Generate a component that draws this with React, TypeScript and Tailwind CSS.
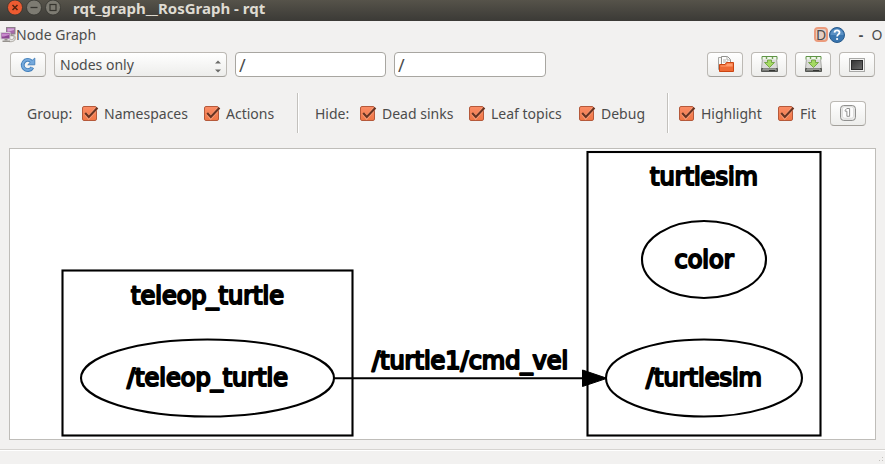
import React, { useState } from 'react';

const BUTTON =
  'flex h-[25px] w-9 shrink-0 items-center justify-center rounded-[4px] border border-[#bcb9b4] border-b-[#a3a09b] bg-linear-to-b from-white to-[#ededeb]';

interface ToolButtonProps {
  label: string;
  children: React.ReactNode;
}

const ToolButton: React.FC<ToolButtonProps> = ({ label, children }) => (
  <button type="button" aria-label={label} className={BUTTON}>
    {children}
  </button>
);

interface CheckOptionProps {
  label: string;
  className: string;
}

const CheckOption: React.FC<CheckOptionProps> = ({ label, className }) => {
  const [checked, setChecked] = useState(true);
  return (
    <label className={`flex shrink-0 items-center gap-1.5 pt-0.5 whitespace-nowrap ${className}`}>
      <span className="grid h-4 w-4 shrink-0">
        <input
          type="checkbox"
          checked={checked}
          onChange={(e) => setChecked(e.target.checked)}
          className="col-start-1 row-start-1 h-[15px] w-[15px] appearance-none rounded-[2px] border border-[#b5593a] bg-white checked:bg-linear-to-b checked:from-[#fa8c65] checked:to-[#f07746]"
        />
        {checked && (
          <svg viewBox="0 0 16 16" className="pointer-events-none col-start-1 row-start-1 h-4 w-4 overflow-visible">
            <path d="M3.5 7.5 6.7 11.5 14.5 2.5" fill="none" stroke="#ffb698" strokeWidth="3.4" opacity=".6" />
            <path d="M3.2 7 6.8 11 15.5 1.8" fill="none" stroke="#683422" strokeWidth="2.1" />
          </svg>
        )}
      </span>
      {label}
    </label>
  );
};

const Separator = () => (
  <div className="h-10 w-0.5 shrink-0 border-r border-l border-r-white border-l-[#c3c1bd]" />
);

const RefreshIcon = () => (
  <svg viewBox="0 0 16 16" className="h-4 w-4">
    <path d="M12.4 10.3A5.1 5.1 0 1 1 11.2 4.2" fill="none" stroke="#4480bb" strokeWidth="3.8" />
    <path d="M14.8 1V7.8H7.8L10.4 5.3 9 4.1 12.4 3.3Z" fill="#75a9dc" stroke="#4480bb" strokeWidth=".9" />
    <path d="M12.2 10.4A5.1 5.1 0 1 1 11.2 4.2" fill="none" stroke="#75a9dc" strokeWidth="2" />
  </svg>
);

const OpenIcon = () => (
  <svg viewBox="0 0 17 17" className="h-[17px] w-[17px]">
    <path d="M1.5 1.5H7L9 3.5V13.5H1.5Z" fill="#f8f8f7" stroke="#a5a5a1" />
    <path d="M4.5.5H10.5L13.5 3.5V13.5H4.5Z" fill="#fff" stroke="#92928e" />
    <path d="M10 .5V4H13.5M6 4H9M6 6H11" fill="none" stroke="#b0b0ac" />
    <path d="M2.5 15.5V8.5H8L9.5 6.5H16.5V15.5Z" fill="#ee6a35" stroke="#ca4512" />
    <path d="M3.5 9.5H9L10 7.5H15.6V10.5H3.5Z" fill="#ff9c6d" />
  </svg>
);

const SaveIcon = () => (
  <svg viewBox="0 0 17 17" className="h-[17px] w-[17px]">
    <path d="M1.5 2.5H15.5L16.5 12.5H.5Z" fill="#dadad8" stroke="#a6a7a3" />
    <path d="M.5 12.5H16.5V15.5H.5Z" fill="#777975" stroke="#555753" />
    <path d="M2 13H15" stroke="#b8bab6" />
    <path d="M8 14.5H14" stroke="#343633" />
    <path d="M1 3.5V.5H16V3.5" fill="#f1f7ec" stroke="#5f9446" />
    <path d="M5.5 1V3M11.5 1V3" stroke="#73a556" strokeWidth="1.4" />
    <path d="M6.5 4H10.5V6.5H13.5L8.5 11.5 3.5 6.5H6.5Z" fill="#a4da62" stroke="#669b35" strokeWidth=".8" />
  </svg>
);

const ScreenIcon = () => (
  <svg viewBox="0 0 16 14" className="h-[14px] w-4">
    <defs>
      <linearGradient id="screen" x1="0" y1="0" x2="1" y2="1">
        <stop offset="0" stopColor="#343434" />
        <stop offset="1" stopColor="#6c6c6c" />
      </linearGradient>
    </defs>
    <rect x=".5" y=".5" width="15" height="13" fill="#f2f2f1" stroke="#a8a8a6" />
    <rect x="2.5" y="2.5" width="11" height="9" fill="url(#screen)" stroke="#2c2c2c" />
  </svg>
);

const OriginalSizeIcon = () => (
  <svg viewBox="0 0 16 16" className="h-4 w-4">
    <rect x=".6" y=".6" width="14.8" height="14.8" rx="3" fill="#f0f0ef" stroke="#858583" />
    <rect x="2.5" y="1.8" width="11" height="11.4" rx="2" fill="#fcfcfc" stroke="#d3d3d1" strokeWidth=".7" />
    <path d="M5.2 5.2 6.8 3.5H9.6V11.3H6.9V6.2H5.2Z" fill="#fff" stroke="#858583" strokeWidth=".9" />
  </svg>
);

const NodesIcon = () => (
  <svg viewBox="0 0 16 16" className="h-4 w-4">
    <rect x="6.5" y=".5" width="8.5" height="6.5" fill="#a66aaa" stroke="#8b8188" />
    <path d="M7.5 1.5H14V3L9 4.5H7.5Z" fill="#d4a6d7" />
    <path d="M9 8.5H14M11.5 7V9" stroke="#99958f" strokeWidth="1.4" />
    <path d="M9 11.5c4 3 6-1 4.5-3M9.5 14.5c5 1 7-3 5-6" fill="none" stroke="#bbb8b3" strokeWidth="1.3" />
    <rect x="1" y="5.5" width="9" height="6.5" fill="#8e4794" stroke="#d0cbd0" />
    <path d="M2 6.5H9V8L4 9.5H2Z" fill="#c88acc" />
    <path d="M4.5 12.5H7.5M2.5 14.2H10" stroke="#96928e" strokeWidth="1.4" />
  </svg>
);

const TitleBar = () => (
  <header className="flex h-[21px] items-start bg-linear-to-b from-[#56534a] to-[#3b3a36] pl-[7px]">
    <div className="flex gap-[3px]">
      <button type="button" aria-label="Close" className="h-4 w-4">
        <svg viewBox="0 0 16 16" className="h-4 w-4">
          <circle cx="8" cy="7.5" r="7.5" fill="#ed5b31" stroke="#34332e" strokeWidth=".8" />
          <path d="M5.5 5 10.5 10M10.5 5 5.5 10" stroke="#54230f" strokeWidth="1.5" />
        </svg>
      </button>
      <button type="button" aria-label="Minimize" className="h-4 w-4">
        <svg viewBox="0 0 16 16" className="h-4 w-4">
          <circle cx="8" cy="7.5" r="7.5" fill="#7d7b72" stroke="#34332e" strokeWidth=".8" />
          <path d="M4.5 7.5H11.5" stroke="#36352f" strokeWidth="1.3" />
        </svg>
      </button>
      <button type="button" aria-label="Maximize" className="h-4 w-4">
        <svg viewBox="0 0 16 16" className="h-4 w-4">
          <circle cx="8" cy="7.5" r="7.5" fill="#7d7b72" stroke="#34332e" strokeWidth=".8" />
          <rect x="5" y="4.5" width="6" height="6" fill="none" stroke="#36352f" strokeWidth="1.2" />
        </svg>
      </button>
    </div>
    <h1 className="ml-3 text-[15px] leading-[17px] font-bold whitespace-nowrap text-[#dfdbd2]">
      rqt_graph__RosGraph - rqt
    </h1>
  </header>
);

const DockHeader = () => (
  <div className="flex h-[27px] items-center pr-0.5">
    <NodesIcon />
    <h2 className="text-sm">Node Graph</h2>
    <div className="ml-auto flex items-center">
      <button
        type="button"
        className="flex h-[15px] w-[14px] items-center justify-center rounded-[4px] border-2 border-[#eb9b7c] bg-[#e3cfc5] text-sm leading-none"
      >
        D
      </button>
      <button type="button" aria-label="Help" className="ml-px h-4 w-4">
        <svg viewBox="0 0 16 16" className="h-4 w-4">
          <circle cx="8" cy="8" r="7.5" fill="#3a76b0" stroke="#285b8c" />
          <path d="M1.5 8a6.5 6.5 0 0 1 13 0Z" fill="#5b91c4" />
          <path d="M5.5 5.6C5.7 2.7 10.7 2.8 10.5 5.6 10.4 7.4 8.1 7.4 8.1 9.6" fill="none" stroke="#fff" strokeWidth="1.8" />
          <circle cx="8.1" cy="12" r="1.1" fill="#fff" />
        </svg>
      </button>
      <button type="button" className="ml-3 w-2 text-center text-sm font-bold">-</button>
      <button type="button" className="ml-1.5 w-3 text-center text-sm">O</button>
    </div>
  </div>
);

const FilterBar = () => (
  <div className="flex items-center gap-2 px-2.5 pt-1">
    <ToolButton label="Refresh">
      <RefreshIcon />
    </ToolButton>
    <div className="grid h-[25px] w-[173px] shrink-0 items-center">
      <select
        aria-label="Graph type"
        className="col-start-1 row-start-1 h-[25px] w-full appearance-none rounded-[4px] border border-[#bcb9b4] border-b-[#a3a09b] bg-linear-to-b from-white to-[#ededeb] pl-[5px] text-sm"
      >
        <option>Nodes only</option>
        <option>Nodes/Topics (active)</option>
        <option>Nodes/Topics (all)</option>
      </select>
      <svg viewBox="0 0 6 13" className="pointer-events-none col-start-1 row-start-1 mt-1 mr-1.5 h-[13px] w-1.5 justify-self-end">
        <path d="M0 3.5 3 .5 6 3.5ZM0 9.5 3 12.5 6 9.5Z" fill="#6b6b69" />
      </svg>
    </div>
    <input
      type="text"
      aria-label="Namespace filter"
      defaultValue="/"
      className="h-[25px] w-[151px] rounded-[4px] border border-[#a8a6a1] bg-white px-[3px] text-lg leading-none"
    />
    <input
      type="text"
      aria-label="Topic filter"
      defaultValue="/"
      className="h-[25px] w-[152px] rounded-[4px] border border-[#a8a6a1] bg-white px-[3px] text-lg leading-none"
    />
    <div className="ml-auto flex gap-2">
      <ToolButton label="Load dot file">
        <OpenIcon />
      </ToolButton>
      <ToolButton label="Save as dot">
        <SaveIcon />
      </ToolButton>
      <ToolButton label="Save as SVG">
        <SaveIcon />
      </ToolButton>
      <ToolButton label="Save as image">
        <ScreenIcon />
      </ToolButton>
    </div>
  </div>
);

const OptionsBar = () => (
  <div className="mt-4 flex items-center pl-[27px] text-sm">
    <span className="w-[55px] shrink-0 pt-0.5">Group:</span>
    <CheckOption label="Namespaces" className="w-[122px]" />
    <CheckOption label="Actions" className="w-[93px]" />
    <Separator />
    <span className="ml-4 w-[45px] shrink-0 pt-0.5">Hide:</span>
    <CheckOption label="Dead sinks" className="w-[109px]" />
    <CheckOption label="Leaf topics" className="w-[110px]" />
    <CheckOption label="Debug" className="w-[88px]" />
    <Separator />
    <CheckOption label="Highlight" className="ml-2.5 w-[99px]" />
    <CheckOption label="Fit" className="w-[52px]" />
    <ToolButton label="Fit in view">
      <OriginalSizeIcon />
    </ToolButton>
  </div>
);

const NODES = [
  { name: '/teleop_turtle', cx: 197.5, cy: 229, rx: 126.5 },
  { name: 'color', cx: 694, cy: 110.5, rx: 62 },
  { name: '/turtlesim', cx: 694, cy: 229, rx: 98 },
];

const GROUPS = [
  { name: 'teleop_turtle', x: 52.5, y: 121.5, width: 290, height: 165 },
  { name: 'turtlesim', x: 577.5, y: 3, width: 233, height: 283.5 },
];

const Graph = () => (
  <main className="mx-[9px] mt-[15px] border border-[#bfbdb9] bg-white">
    <svg
      viewBox="0 0 865 290"
      role="img"
      aria-label="ROS node graph"
      className="block w-full"
      fontFamily="DejaVu Sans, sans-serif"
      fontSize="24"
      textAnchor="middle"
    >
      <g fill="none" stroke="#000" strokeWidth="2.1">
        {GROUPS.map((g) => (
          <rect key={g.name} x={g.x} y={g.y} width={g.width} height={g.height} />
        ))}
        {NODES.map((n) => (
          <ellipse key={n.name} cx={n.cx} cy={n.cy} rx={n.rx} ry="38.5" />
        ))}
        <path d="M324 229.3H573" />
      </g>
      <path d="M572.5 221 597 229.3 572.5 237.5Z" stroke="#000" />
      <g stroke="#000" strokeWidth="2.1" strokeLinejoin="round">
        {GROUPS.map((g) => (
          <text key={g.name} x={g.x + g.width / 2} y={g.y + 33}>
            {g.name}
          </text>
        ))}
        {NODES.map((n) => (
          <text key={n.name} x={n.cx} y={n.cy + 8}>
            {n.name}
          </text>
        ))}
        <text x="460" y="220">/turtle1/cmd_vel</text>
      </g>
    </svg>
  </main>
);

export default function App() {
  return (
    <div className="flex min-h-screen flex-col overflow-hidden bg-[#f2f1f0] font-['Noto_Sans',sans-serif] text-[#4c4c4c]">
      <TitleBar />
      <DockHeader />
      <FilterBar />
      <OptionsBar />
      <Graph />
      <footer className="mt-[9px] flex grow items-end justify-end border-t border-[#d6d4d1] p-px shadow-[inset_0_1px_0_#fff]">
        <svg viewBox="0 0 6 6" className="h-1.5 w-1.5">
          <path d="M4 0H5V1H4ZM1 3H2V4H1ZM4 3H5V4H4Z" fill="#c3c1bd" />
        </svg>
      </footer>
    </div>
  );
}
